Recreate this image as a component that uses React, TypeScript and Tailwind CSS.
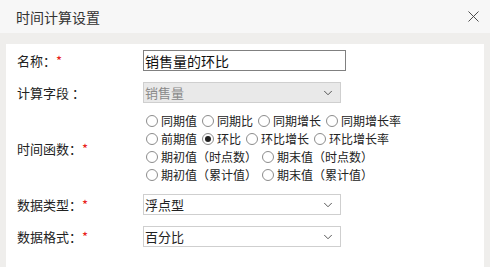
import { X, ChevronDown } from 'lucide-react';

const font = { fontFamily: '"Noto Sans CJK SC", "Noto Sans", sans-serif' };

function Radio({ label, checked }: { label: string; checked?: boolean }) {
  return (
    <span className="flex items-center gap-[3px]">
      <span className="flex h-[12px] w-[12px] items-center justify-center rounded-full border border-[#8c8c8c] bg-white">
        {checked && <span className="h-[6px] w-[6px] rounded-full bg-[#222]" />}
      </span>
      <span>{label}</span>
    </span>
  );
}

function Label({ text, required }: { text: string; required?: boolean }) {
  return (
    <div className="w-[126px] shrink-0 text-[13px] text-[#222]">
      {text}
      {required && <span className="text-[#e81818]">*</span>}
    </div>
  );
}

function Select({ value, disabled }: { value: string; disabled?: boolean }) {
  return (
    <div
      className={`flex h-[21px] w-[198px] items-center justify-between border border-[#cfcfcf] pl-[1px] pr-[5px] text-[13px] ${
        disabled ? 'bg-[#e9e9e9] text-[#8a8a8a]' : 'bg-white text-[#222]'
      }`}
    >
      <span>{value}</span>
      <ChevronDown size={14} strokeWidth={1.4} className="text-[#333]" />
    </div>
  );
}

export default function App() {
  const rows = [
    ['同期值', '同期比', '同期增长', '同期增长率'],
    ['前期值', '环比', '环比增长', '环比增长率'],
    ['期初值（时点数）', '期末值（时点数）'],
    ['期初值（累计值）', '期末值（累计值）'],
  ];

  return (
    <div className="flex h-[267px] w-[490px] flex-col bg-[#efeeec] leading-none" style={font}>
      <div className="flex h-[33px] shrink-0 items-center justify-between bg-[#f7f7f7] pl-[16px] pr-[7px]">
        <span className="text-[14px] text-[#333]">时间计算设置</span>
        <X size={19} strokeWidth={1.2} className="text-[#444]" />
      </div>
      <div className="mx-[6px] mt-[11px] flex flex-1 flex-col bg-white pl-[11px] pt-[6px]">
        <div className="flex items-center">
          <Label text="名称：" required />
          <div className="flex h-[21px] w-[203px] items-center border border-[#808080] pl-[1px] text-[14px] text-[#111]">
            销售量的环比
          </div>
        </div>
        <div className="mt-[11px] flex items-center">
          <Label text="计算字段 ：" />
          <Select value="销售量" disabled />
        </div>
        <div className="mt-[9px] flex items-center">
          <Label text="时间函数：" required />
          <div className="flex flex-col pl-[3px] text-[12px] text-[#222]">
            {rows.map((row, i) => (
              <div key={i} className="flex h-[18px] items-center gap-[5px]">
                {row.map((r) => (
                  <Radio key={r} label={r} checked={r === '环比'} />
                ))}
              </div>
            ))}
          </div>
        </div>
        <div className="mt-[10px] flex items-center">
          <Label text="数据类型：" required />
          <Select value="浮点型" />
        </div>
        <div className="mt-[11px] flex items-center">
          <Label text="数据格式：" required />
          <Select value="百分比" />
        </div>
      </div>
    </div>
  );
}
